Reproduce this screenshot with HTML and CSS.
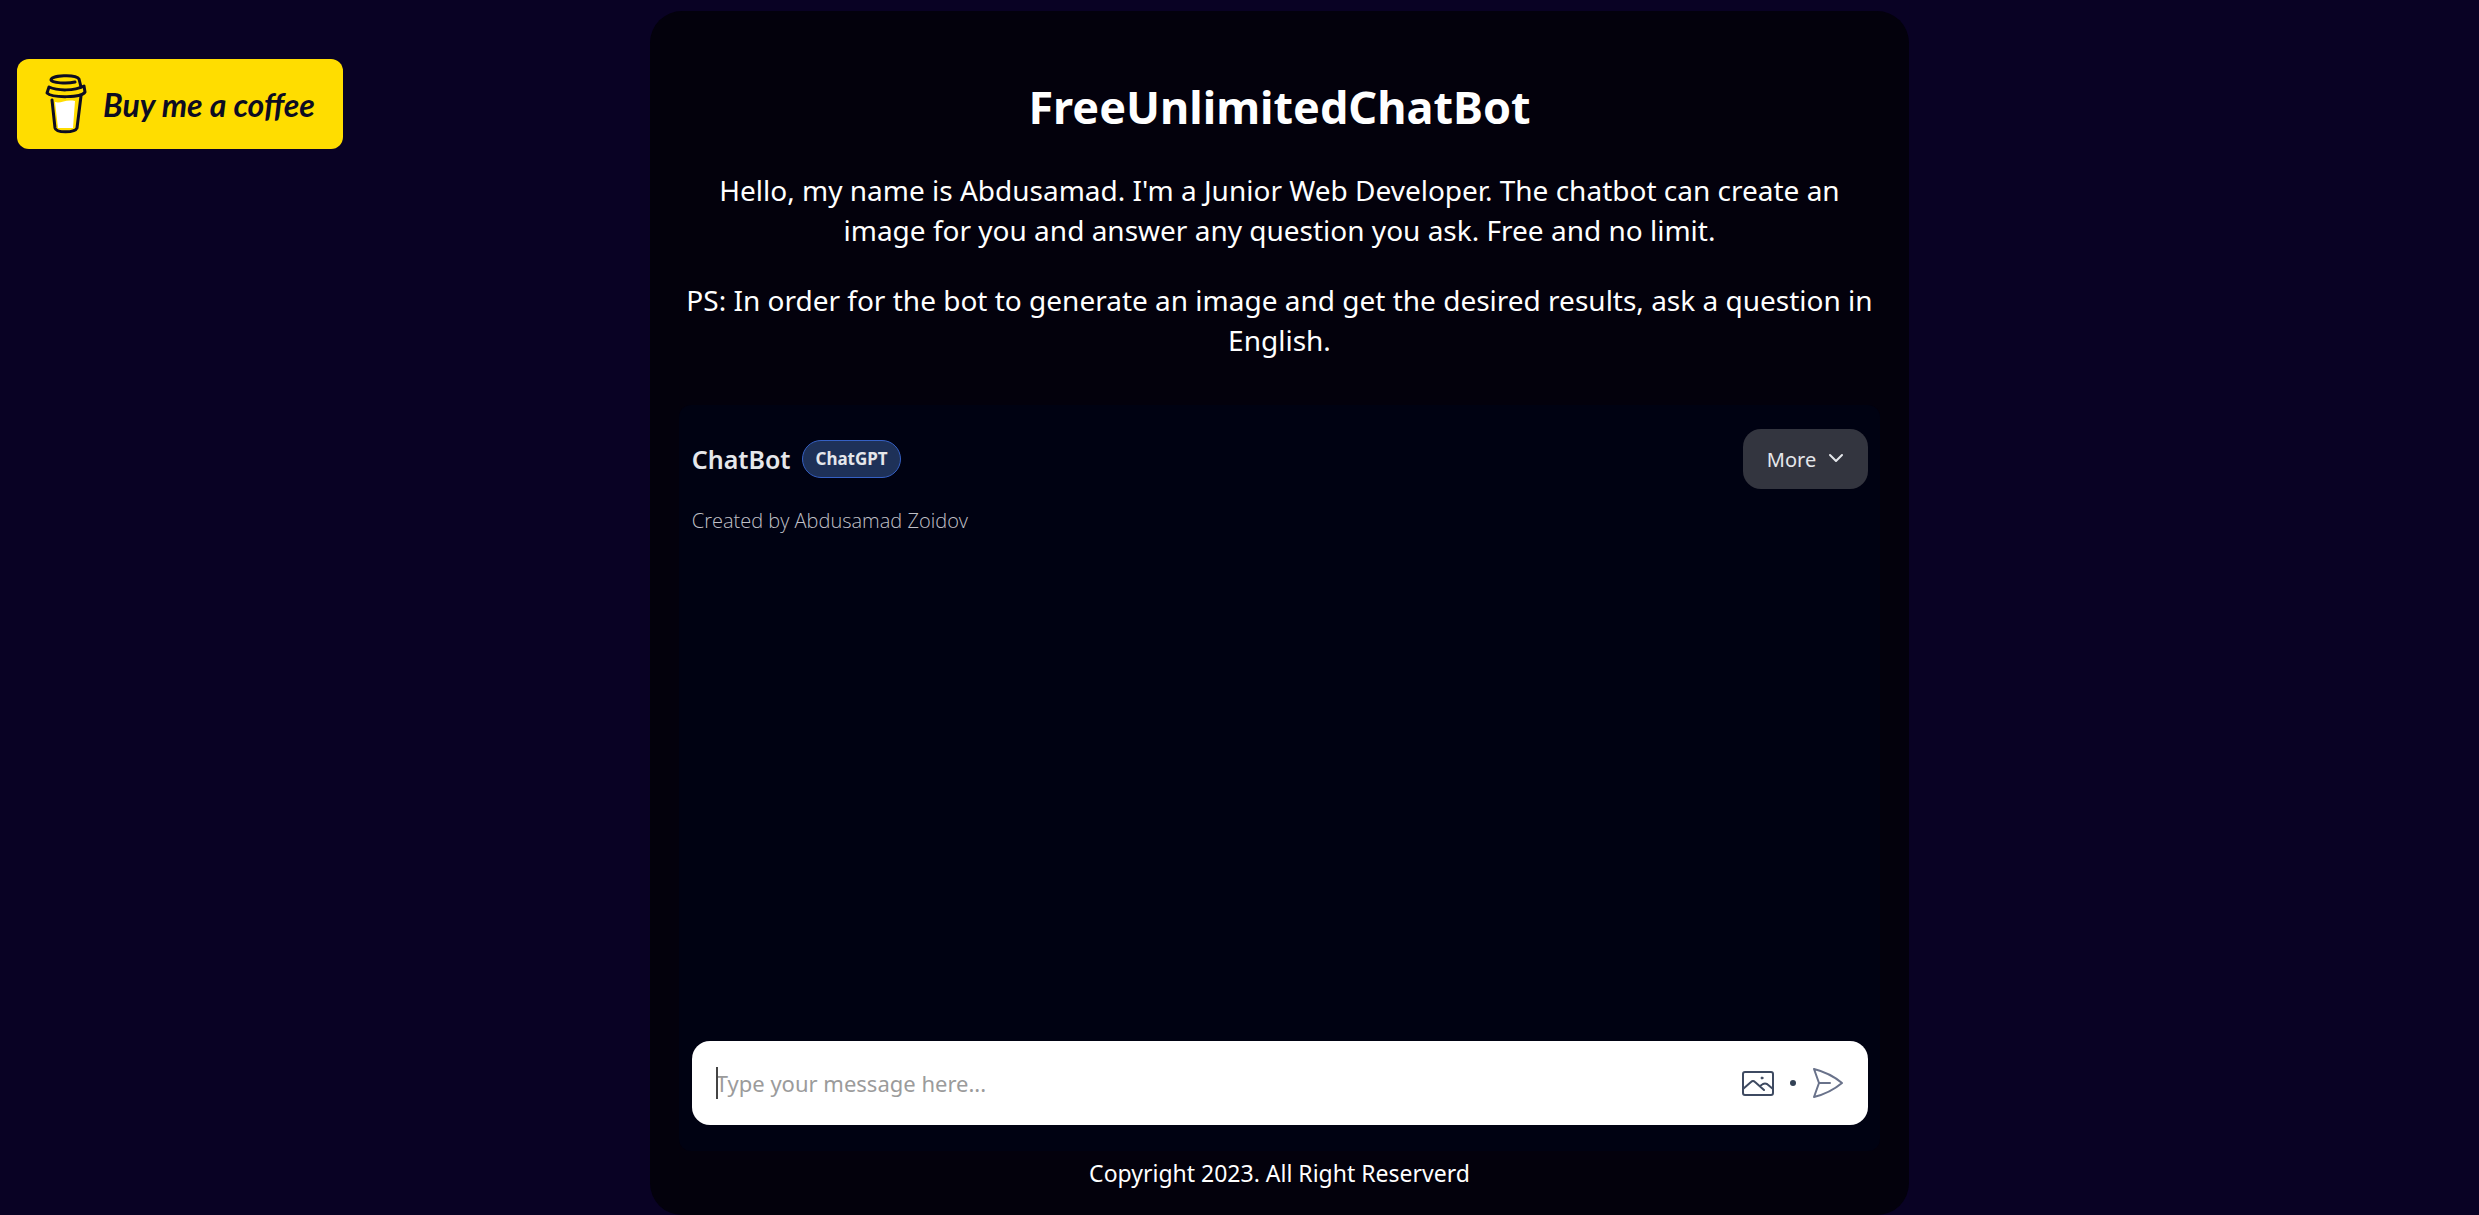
FILE: index.html
```html
<!DOCTYPE html>
<html lang="en">
<head>
<meta charset="utf-8">
<title>FreeUnlimitedChatBot</title>
<link rel="stylesheet" href="styles.css">
</head>
<body>
<div class="page">
  <aside class="support">
    <a class="coffee" href="#">
      <svg class="coffee-cup" viewBox="0 0 42 60" fill="none" stroke="#0d0c22" stroke-width="3" stroke-linecap="round" stroke-linejoin="round" aria-hidden="true">
        <path d="M10 28c6 2 10-3 20-1l-2 27H13z" fill="#fff" stroke="none"/>
        <path d="M30 8C22 10 7 9 6 6c0-5 25-6 28-1l2 8"/>
        <path d="M4 13c9 4 25 4 35-1l1 6c-3 6-33 6-38 1z"/>
        <path d="M7 26l3 28c1 5 20 5 22 0l4-32"/>
      </svg>
      <span class="coffee-text">Buy me a coffee</span>
    </a>
  </aside>
  <main class="card">
    <h1 class="title">FreeUnlimitedChatBot</h1>
    <p class="intro">Hello, my name is Abdusamad. I'm a Junior Web Developer. The chatbot can create an image for you and answer any question you ask. Free and no limit.</p>
    <p class="intro">PS: In order for the bot to generate an image and get the desired results, ask a question in English.</p>
    <section class="chat">
      <header class="chat-header">
        <h2 class="chat-name">ChatBot</h2>
        <span class="badge">ChatGPT</span>
        <button class="more" type="button">More
          <svg class="chevron" viewBox="0 0 16 16" fill="none" stroke="currentColor" stroke-width="2" stroke-linecap="round" stroke-linejoin="round" aria-hidden="true"><path d="M2 4l6 6 6-6"/></svg>
        </button>
      </header>
      <p class="author">Created by Abdusamad Zoidov</p>
      <div class="messages"></div>
      <form class="composer">
        <div class="field">
          <input class="message" type="text" placeholder="Type your message here..." aria-label="Message" autofocus>
        </div>
        <button class="icon-button" type="button" aria-label="Create image">
          <svg class="icon" viewBox="0 0 32 32" fill="none" stroke="#3e4a61" stroke-width="2" stroke-linecap="round" stroke-linejoin="round" aria-hidden="true">
            <rect x="1" y="5" width="30" height="23" rx="2"/>
            <path d="M1 22l8-7q2-2 4 0l9 8M18 19l3-2q2-1 4 0l6 5"/>
            <circle cx="20" cy="11" r="1" fill="#3e4a61" stroke-width="1"/>
          </svg>
        </button>
        <span class="dot"></span>
        <button class="icon-button" type="submit" aria-label="Send">
          <svg class="icon" viewBox="0 0 32 32" fill="none" stroke="#69728a" stroke-width="2" stroke-linecap="round" stroke-linejoin="round" aria-hidden="true">
            <path d="M7 16L2 2q16 4 28 14Q18 26 2 30zh11"/>
          </svg>
        </button>
      </form>
    </section>
    <footer class="copyright">Copyright 2023. All Right Reserverd</footer>
  </main>
</div>
</body>
</html>
```

FILE: styles.css
```css
* { box-sizing: border-box; }

body {
  margin: 0;
  background: #090224;
  color: #fff;
  font-family: "Noto Sans", "Open Sans", sans-serif;
}

.page {
  display: grid;
  grid-template-columns: 65fr 126fr 57fr;
  min-height: 100vh;
  padding-top: 11px;
}

.support { padding: 48px 17px; }

.coffee {
  display: inline-flex;
  align-items: center;
  gap: 16px;
  height: 90px;
  padding: 0 28px;
  border-radius: 12px;
  background: #fd0;
  color: #0d0c22;
  text-decoration: none;
}

.coffee-cup { width: 42px; height: 60px; }

.coffee-text {
  font-family: Lato, sans-serif;
  font-size: 32px;
  font-style: italic;
  font-weight: 700;
  white-space: nowrap;
}

.card {
  display: flex;
  flex-direction: column;
  padding: 64px 29px 24px;
  border-radius: 32px;
  background: #03010c;
}

.title {
  margin: 0 0 31px;
  font-size: 45px;
  line-height: 64px;
  text-align: center;
}

.intro {
  margin: 0 0 30px;
  font-size: 28px;
  line-height: 40px;
  text-align: center;
}

.chat {
  display: flex;
  flex: 1;
  flex-direction: column;
  margin-top: 15px;
  padding: 24px 12px 26px 13px;
  border-radius: 12px;
  background: #000212;
}

.chat-header {
  display: flex;
  align-items: center;
  gap: 12px;
}

.chat-name {
  margin: 0;
  color: #e5e7eb;
  font-size: 25px;
  font-weight: 600;
}

.badge {
  padding: 0 12px;
  border: 1px solid #3560c4;
  border-radius: 20px;
  background: #1e3158;
  color: #e5e7eb;
  font-size: 17px;
  font-weight: 700;
  line-height: 36px;
}

.more {
  display: flex;
  align-items: center;
  gap: 12px;
  height: 60px;
  margin-left: auto;
  padding: 0 24px;
  border: 0;
  border-radius: 18px;
  background: #33353f;
  color: #e5e7eb;
  font: inherit;
  font-size: 20px;
}

.chevron { width: 16px; height: 16px; }

.author {
  margin: 16px 0 0;
  color: #c0c1c8;
  font-family: "Open Sans", sans-serif;
  font-size: 20px;
  font-weight: 300;
  line-height: 32px;
}

.messages { flex: 1; }

.composer {
  display: flex;
  align-items: center;
  gap: 16px;
  height: 84px;
  padding: 0 24px;
  border-radius: 18px;
  background: #fff;
}

.field {
  position: relative;
  flex: 1;
}

.field:focus-within::before {
  content: "";
  position: absolute;
  top: 4px;
  left: 0;
  width: 2px;
  height: 32px;
  background: #444;
}

.message {
  display: block;
  width: 100%;
  height: 40px;
  padding: 0;
  border: 0;
  outline: 0;
  background: transparent;
  caret-color: transparent;
  color: #333;
  font: inherit;
  font-size: 22px;
}

.message::placeholder { color: #9b9b9b; }

.icon-button {
  display: flex;
  padding: 0;
  border: 0;
  background: transparent;
}

.icon { width: 32px; height: 32px; }

.dot {
  width: 6px;
  height: 6px;
  border-radius: 50%;
  background: #334155;
}

.copyright {
  margin-top: 4px;
  font-size: 23px;
  line-height: 36px;
  text-align: center;
}
```
